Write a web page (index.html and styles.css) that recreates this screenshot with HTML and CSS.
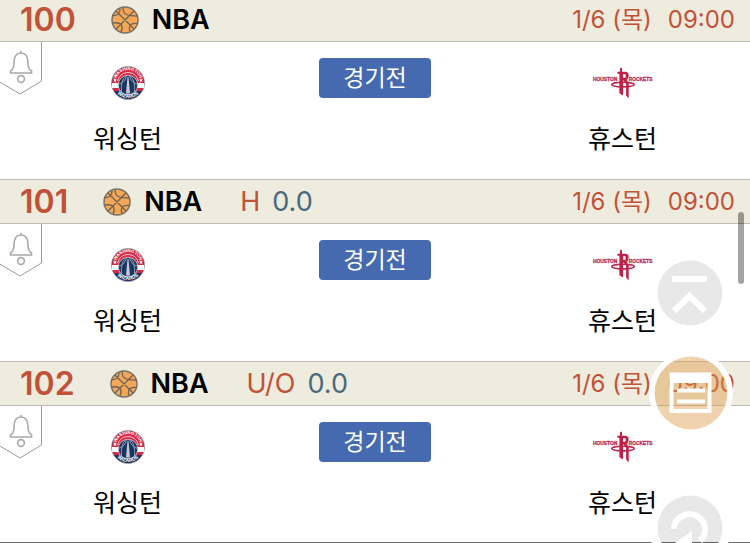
FILE: index.html
```html
<!DOCTYPE html>
<html lang="ko">
<head>
<meta charset="utf-8">
<meta name="viewport" content="width=device-width, initial-scale=1">
<title>NBA</title>
<link rel="stylesheet" href="styles.css">
</head>
<body>
<svg class="defs" aria-hidden="true">
  <defs>
    <symbol id="ball" viewBox="0 0 28 28">
      <circle cx="14" cy="14" r="13" fill="#f4a757" stroke="#77736a" stroke-width="1.500"/>
      <path d="M5 5 23 23M23 5 5 23M12 1.500Q12 7 15.500 8.500T26.500 10M1.500 9.500Q9 10 9 3M2 17Q9 16 10.500 19T10 26M26.500 17.500Q19 17 18.500 21T19.500 25.500" fill="none" stroke="#6d6455" stroke-width="1.300"/>
    </symbol>
    <symbol id="bell" viewBox="0 0 42 53">
      <path d="M-1 -1H41.500V39L20 52 -1 39.500Z" fill="#fff" stroke="#999" stroke-width="1"/>
      <path d="M21 9V11M10.500 31V29Q14 27 14 21C14 14 16.500 11 21 11S28 14 28 21Q28 27 31.500 29V31Z" fill="none" stroke="#a9a9a9" stroke-width="1.600"/>
      <circle cx="21" cy="37" r="3.400" fill="none" stroke="#a9a9a9" stroke-width="1.600"/>
    </symbol>
    <symbol id="wizards" viewBox="0 0 68 68">
      <circle cx="34" cy="34" r="33" fill="#1b3460" stroke="#a9a3ad" stroke-width="1.500"/>
      <path d="M2 34a32 32 0 0 1 64 0Z" fill="#d92844"/>
      <path d="M2 34H66V44L60 46H8L2 44Z" fill="#fff"/>
      <path d="M3 44H65L61 51H7Z" fill="#d92844"/>
      <path d="M7 50H61A32 32 0 0 1 7 50Z" fill="#1b3460"/>
      <path d="M13 30Q18 13 34 13T55 30" fill="none" stroke="#f3c6cd" stroke-width="2"/>
      <circle cx="34" cy="38" r="19.500" fill="#1b3460" stroke="#d7dce4" stroke-width="1.500"/>
      <path d="M29 20Q19 29 21 52M39 20Q49 29 47 52M15 37Q28 33 31 20M53 37Q40 33 37 20" fill="none" stroke="#aeb8c9" stroke-width="1.500"/>
      <path d="M33 22H35L38 55H30Z" fill="#c5ccd8"/>
      <path d="m8 24 1.200 3H12l-2.200 2 .8 3L8 30.500 5.400 32l.8-3L4 27h2.800ZM60 24l1.200 3H64l-2.200 2 .8 3L60 30.500 57.400 32l.8-3L56 27h2.800Z" fill="#fff"/>
      <path id="arc-top" d="M10 26A25 25 0 0 1 58 26" fill="none"/>
      <path id="arc-bottom" d="M11 53A30 30 0 0 0 57 53" fill="none"/>
      <g fill="#fff" font-family="Liberation Sans, sans-serif" font-weight="700" text-anchor="middle">
        <text font-size="9"><textPath href="#arc-top" startOffset="50%">WASHINGTON</textPath></text>
        <text font-size="10"><textPath href="#arc-bottom" startOffset="50%">WIZARDS</textPath></text>
      </g>
    </symbol>
    <symbol id="rockets" viewBox="0 0 120 60">
      <g fill="#b72a50" stroke="#b72a50" stroke-width=".5" font-family="Liberation Sans, sans-serif" font-weight="700" font-size="9.500">
        <text x="49" y="26" text-anchor="end">HOUSTON</text>
        <text x="71" y="26">ROCKETS</text>
      </g>
      <ellipse cx="60" cy="33" rx="22" ry="4.500" fill="none" stroke="#b72a50" stroke-width="3"/>
      <path d="M49 8H54V2L58 0V8H64Q71 8 71 15Q71 21 67 24L71 30V60L66 54V31L61 25H60V54L53 50V12H49ZM60 13V20H65V13Z" fill="#c01f48" fill-rule="evenodd"/>
    </symbol>
  </defs>
</svg>

<main class="games">
  <article class="game">
    <header class="bar">
      <span class="num">100</span>
      <svg class="ball" aria-hidden="true"><use href="#ball"/></svg>
      <span class="league">NBA</span>
      <time class="when"><span>1/6 (목)</span><span>09:00</span></time>
    </header>
    <div class="match">
      <button class="alarm" type="button" aria-label="알림"><svg><use href="#bell"/></svg></button>
      <div class="team"><svg class="wizards" aria-hidden="true"><use href="#wizards"/></svg><span>워싱턴</span></div>
      <button class="status" type="button">경기전</button>
      <div class="team away"><svg class="rockets" aria-hidden="true"><use href="#rockets"/></svg><span>휴스턴</span></div>
    </div>
  </article>
  <article class="game">
    <header class="bar">
      <span class="num">101</span>
      <svg class="ball" aria-hidden="true"><use href="#ball"/></svg>
      <span class="league">NBA</span>
      <span class="kind">H</span><span class="line">0.0</span>
      <time class="when"><span>1/6 (목)</span><span>09:00</span></time>
    </header>
    <div class="match">
      <button class="alarm" type="button" aria-label="알림"><svg><use href="#bell"/></svg></button>
      <div class="team"><svg class="wizards" aria-hidden="true"><use href="#wizards"/></svg><span>워싱턴</span></div>
      <button class="status" type="button">경기전</button>
      <div class="team away"><svg class="rockets" aria-hidden="true"><use href="#rockets"/></svg><span>휴스턴</span></div>
    </div>
  </article>
  <article class="game">
    <header class="bar">
      <span class="num">102</span>
      <svg class="ball" aria-hidden="true"><use href="#ball"/></svg>
      <span class="league">NBA</span>
      <span class="kind">U/O</span><span class="line">0.0</span>
      <time class="when"><span>1/6 (목)</span><span>09:00</span></time>
    </header>
    <div class="match">
      <button class="alarm" type="button" aria-label="알림"><svg><use href="#bell"/></svg></button>
      <div class="team"><svg class="wizards" aria-hidden="true"><use href="#wizards"/></svg><span>워싱턴</span></div>
      <button class="status" type="button">경기전</button>
      <div class="team away"><svg class="rockets" aria-hidden="true"><use href="#rockets"/></svg><span>휴스턴</span></div>
    </div>
  </article>
</main>

<button class="fab top" type="button" aria-label="맨 위로">
  <svg viewBox="0 0 84 84"><circle cx="42" cy="42" r="32.500" fill="#000" fill-opacity=".09"/><path d="M24 28H59M26 60 41.500 45 57 60" fill="none" stroke="#fff" stroke-width="6"/></svg>
</button>
<button class="fab slip" type="button" aria-label="목록">
  <svg viewBox="0 0 84 84"><circle cx="42" cy="42" r="39" fill="none" stroke="#fff" stroke-width="6"/><circle cx="42" cy="42" r="36.500" fill="#dd9340" fill-opacity=".42"/><path d="M20.500 21.500H62.500V62H20.500ZM24.500 32V58H58.500V32Z" fill="#fff" fill-rule="evenodd"/><path d="M28 37.500H56V41.500H28ZM28 48.500H56V52.500H28Z" fill="#fff"/></svg>
</button>
<button class="fab reload" type="button" aria-label="새로고침">
  <svg viewBox="0 0 84 84"><circle cx="42" cy="42" r="36.500" fill="none" stroke="#fff" stroke-width="9"/><circle cx="42" cy="42" r="32.500" fill="#000" fill-opacity=".09"/><path d="M26 43A15.500 15.500 0 1 1 52 55" fill="none" stroke="#fff" stroke-width="6"/><path d="M44 45V64L27 57Z" fill="#fff"/></svg>
</button>
<div class="thumb"></div>
</body>
</html>
```
FILE: styles.css
```css
* { box-sizing: border-box; }

body {
  margin: 0;
  overflow: hidden;
  background: #fff;
  color: #000;
  font-family: Inter, "Noto Sans CJK KR", sans-serif;
}

button {
  margin: 0;
  padding: 0;
  border: 0;
  background: none;
  font: inherit;
  cursor: pointer;
}

svg { display: block; }

.defs {
  position: absolute;
  width: 0;
  height: 0;
}

/* The list rests scrolled slightly past its first edge. */
.games {
  margin-top: -3px;
  border-bottom: 1px solid #6b6b6b;
}

.bar {
  display: flex;
  align-items: center;
  height: 45px;
  padding: 0 15px 0 20px;
  border-top: 1px solid #bbbcb5;
  border-bottom: 1px solid #bbbcb5;
  background: #eeecdf;
  line-height: 43px;
  white-space: nowrap;
}

.num {
  color: #c25237;
  font-size: 32px;
  font-weight: 600;
}

.ball {
  width: 28px;
  height: 28px;
  margin: 0 13px 0 35px;
}

.league {
  font-size: 27px;
  font-weight: 600;
}

.kind {
  margin: 0 12px 0 38px;
  color: #c25237;
  font-size: 27px;
}

.line {
  color: #486a7c;
  font-size: 27px;
}

.when {
  display: flex;
  gap: 16px;
  margin-left: auto;
  color: #c25237;
  font-size: 24px;
}

.match {
  position: relative;
  display: grid;
  grid-template-columns: 1fr auto 1fr;
  height: 137px;
}

.game:last-child .match { height: 136px; }

.alarm {
  position: absolute;
  top: 0;
  left: 0;
}

.alarm svg {
  width: 42px;
  height: 53px;
}

.team {
  display: flex;
  flex-direction: column;
  align-items: center;
  gap: 20px;
  padding: 23px 64px 0 0;
  font-size: 25px;
  line-height: 36px;
}

.away { padding: 23px 0 0 64px; }

.wizards,
.rockets { height: 36px; }

.wizards { width: 34px; }

.rockets { width: 62px; }

.status {
  width: 112px;
  height: 40px;
  margin-top: 16px;
  border-radius: 4px;
  background: #466aaf;
  color: #fff;
  font-size: 23px;
  line-height: 40px;
}

.fab {
  position: fixed;
  right: 17px;
  width: 84px;
  height: 84px;
}

.top { bottom: 208px; right: 18px; }

.slip { bottom: 108px; }

.reload { bottom: -27px; right: 18px; }

.thumb {
  position: fixed;
  top: 212px;
  right: 6px;
  width: 6px;
  height: 72px;
  border-radius: 3px;
  background: rgba(0, 0, 0, 0.36);
}
```
